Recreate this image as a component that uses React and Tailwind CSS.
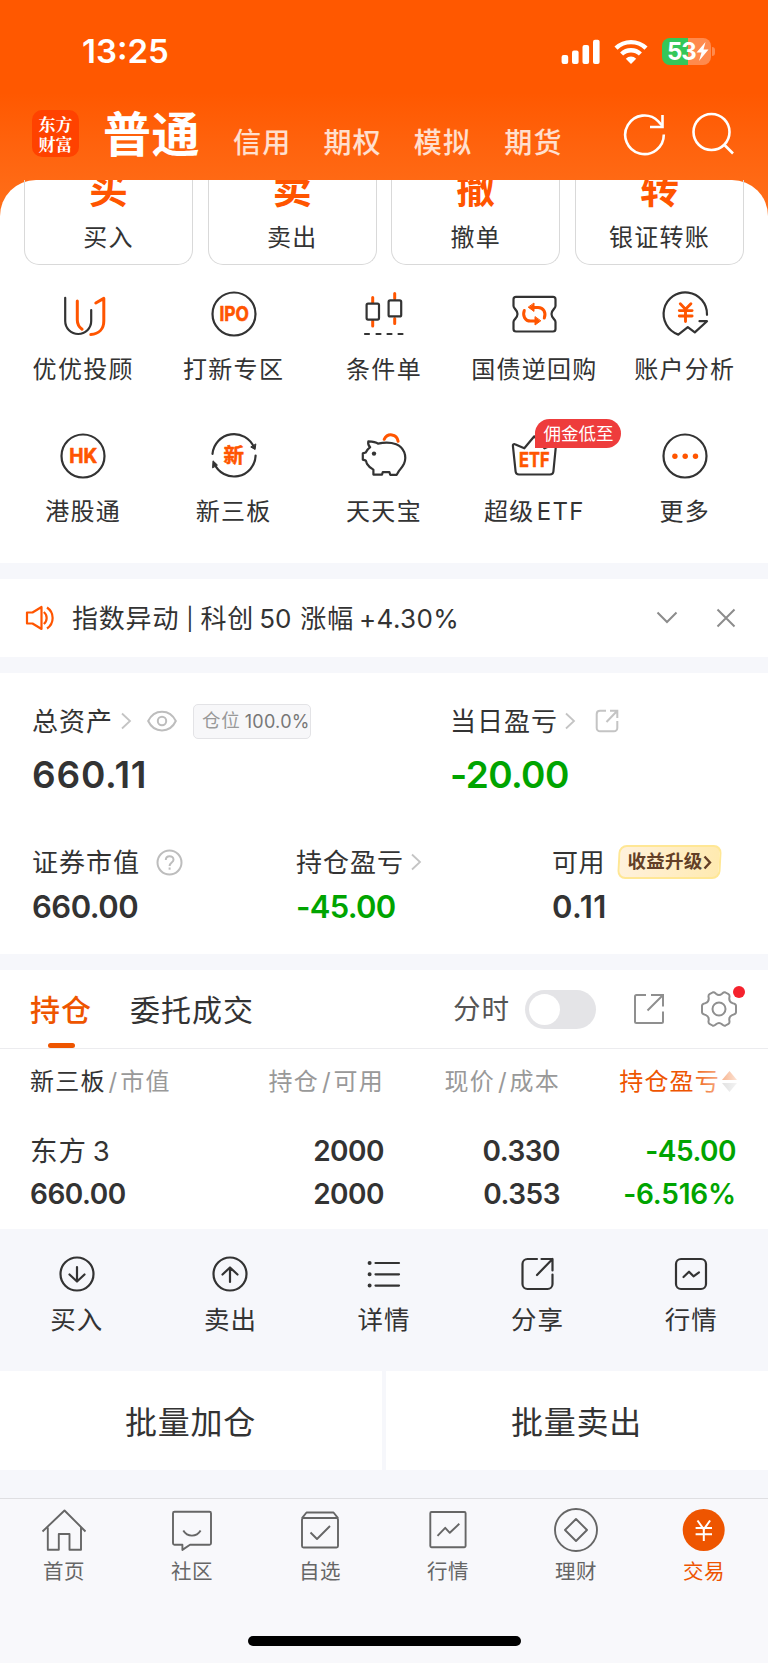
import React from "react";

const INK = "#333333";
const ORANGE = "#ff5500";

const markets = ["信用", "期权", "模拟", "期货"];

const tradeCards = [
  { mark: "买", label: "买入" },
  { mark: "卖", label: "卖出" },
  { mark: "撤", label: "撤单" },
  { mark: "转", label: "银证转账" },
];

const Svg = ({ size = 48, className = "", children }) => (
  <svg
    width={size}
    height={size}
    viewBox={`0 0 ${size} ${size}`}
    fill="none"
    stroke={INK}
    strokeWidth="2.2"
    strokeLinecap="round"
    strokeLinejoin="round"
    className={`shrink-0 ${className}`}
  >
    {children}
  </svg>
);

const AdvisorIcon = () => (
  <Svg>
    <path d="M6.2 7.8V31a13 13 0 0 0 26 0V20" />
    <g stroke={ORANGE} strokeWidth="3">
      <path d="M18.3 11v19c0 4 1.6 7 4.8 9.2" />
      <path d="M36.8 13l8-4.6V31c0 8-5 13-13 13.6" />
    </g>
  </Svg>
);

const IpoIcon = () => (
  <Svg>
    <circle cx="24" cy="24" r="21.5" />
    <text x="9.5" y="31" fontSize="20" textLength="29.5" lengthAdjust="spacingAndGlyphs" className="fill-[#ff5500] stroke-[#ff5500] stroke-[0.6] font-bold">
      IPO
    </text>
  </Svg>
);

const CandleIcon = () => (
  <Svg>
    <g stroke={ORANGE} strokeWidth="3">
      <path d="M12.7 7.5v5M12.7 31v5M34.7 3.6v5M34.7 28.5v5" />
    </g>
    <rect x="6.6" y="13.6" width="12.4" height="16" rx="1.5" />
    <rect x="28.6" y="10.4" width="12.6" height="16" rx="1.5" />
    <path d="M5 44h4M16.5 44h4M27.5 44h4M38.5 44h4" />
  </Svg>
);

const RepoIcon = () => (
  <Svg>
    <path d="M6 6.9h37a2.5 2.5 0 0 1 2.5 2.5v6.6c0 3-4 3.5-4 8s4 5 4 8v7a2.5 2.5 0 0 1-2.5 2.5H6A2.5 2.5 0 0 1 3.5 39v-7c0-3 4-3.5 4-8s-4-5-4-8V9.4A2.5 2.5 0 0 1 6 6.9z" />
    <g stroke={ORANGE} strokeWidth="3">
      <path d="M14.3 20.5c-2 5 .7 10.6 6.2 10.6h4.2" />
      <path d="M34.3 28c2-5-.7-10.6-6.2-10.6h-4.2" />
    </g>
    <g fill={ORANGE} stroke={ORANGE} strokeWidth="1">
      <path d="M25 27v8l5.5-4z" />
      <path d="M24 13.4v8l-5.5-4z" />
    </g>
  </Svg>
);

const AnalysisIcon = () => (
  <Svg>
    <path d="M46 24.8A21.7 21.7 0 1 0 17.3 44.6l9.5-7.4 7 5.2L46 31.2h-7.5" />
    <g stroke={ORANGE} strokeWidth="2.9">
      <path d="M19.3 13.8l5.2 5.4 5.4-5.4M24.5 19.5v12M18.3 20.6h12.8M18.3 26h12.8" />
    </g>
  </Svg>
);

const HkIcon = () => (
  <Svg>
    <circle cx="24" cy="24" r="21.5" />
    <text x="10.2" y="31" fontSize="20" textLength="28" lengthAdjust="spacingAndGlyphs" className="fill-[#ff5500] stroke-[#ff5500] stroke-[0.6] font-bold">
      HK
    </text>
  </Svg>
);

const NewBoardIcon = () => (
  <Svg>
    <path d="M2.5 21.8A21.6 21.6 0 0 1 44 15.5" />
    <path d="M45.6 23.6A21.6 21.6 0 0 1 4.2 31.5" />
    <path d="M45.8 12.3l-.7 5.2-4-2.3zM2.6 35.5l.4-6.7 4.2 4z" fill={INK} strokeWidth="1" />
    <text x="13.4" y="31.3" fontSize="20.5" className="fill-[#ff5500] stroke-[#ff5500] stroke-[0.5] font-bold">
      新
    </text>
  </Svg>
);

const PiggyIcon = () => (
  <Svg>
    <path d="M8.3 9.4c3.5.2 7.5.6 9.7 2.2 5-1 13-1.2 18.2.6 8 3.4 11 12 7.8 19.6-1.4 3.1-4.2 6-5.3 7.6l-2 3.4h-6.5l-.8-2.7h-6.6l-.8 2.5h-8.6v-5c-3-1.6-5-3.3-6.4-5.7-.8-1.4-.6-3.2-1.6-3.500l-2.600-.8v-6.200l2.900-.9c.9-2 2.200-3.500 4.500-5.300-1.700-1.500-2.400-3.400-1.900-5.800z" />
    <path d="M24.2 7.300c3.300-6.600 12.600-5.800 13.900 2" stroke={ORANGE} strokeWidth="3" />
    <circle cx="14" cy="21.6" r="2.2" fill={INK} stroke="none" />
  </Svg>
);

const EtfIcon = () => (
  <Svg>
    <path d="M2.9 13.8c-.2-1.300.9-2 2-1.500l9.400 4L24.300 4.300l10.200 12 9.400-4c1.100-.5 2.200.2 2 1.500l-2.500 25.700c-.2 2-1.400 3-3.400 3H9c-2 0-3.200-1-3.400-3z" />
    <text x="9" y="35.3" fontSize="20" textLength="30.5" lengthAdjust="spacingAndGlyphs" className="fill-[#ff5500] stroke-[#ff5500] stroke-[0.6] font-bold">
      ETF
    </text>
  </Svg>
);

const MoreIcon = () => (
  <Svg>
    <circle cx="24" cy="24" r="21.5" />
    <g fill={ORANGE} stroke="none">
      <circle cx="13.9" cy="24.2" r="2.7" />
      <circle cx="24.2" cy="24.2" r="2.7" />
      <circle cx="34.5" cy="24.2" r="2.7" />
    </g>
  </Svg>
);

const shortcuts = [
  { label: "优优投顾", icon: <AdvisorIcon /> },
  { label: "打新专区", icon: <IpoIcon /> },
  { label: "条件单", icon: <CandleIcon /> },
  { label: "国债逆回购", icon: <RepoIcon /> },
  { label: "账户分析", icon: <AnalysisIcon /> },
  { label: "港股通", icon: <HkIcon /> },
  { label: "新三板", icon: <NewBoardIcon /> },
  { label: "天天宝", icon: <PiggyIcon /> },
  { label: "超级 ETF", icon: <EtfIcon />, badge: "佣金低至" },
  { label: "更多", icon: <MoreIcon /> },
];

const actions = [
  {
    label: "买入",
    icon: (
      <Svg size={38}>
        <circle cx="19" cy="19" r="16.5" />
        <path d="M19 12v14M11.5 19.500l7.500 7 7.500-7" />
      </Svg>
    ),
  },
  {
    label: "卖出",
    icon: (
      <Svg size={38}>
        <circle cx="19" cy="19" r="16.5" />
        <path d="M19 27V12.500M11.500 19.500l7.500-7 7.500 7" />
      </Svg>
    ),
  },
  {
    label: "详情",
    icon: (
      <Svg size={38}>
        <path d="M10.5 8H34M10.5 19.3H34M10.5 30.6H34" />
        <path d="M4.6 8h.01M4.6 19.3h.01M4.6 30.6h.01" strokeWidth="4" />
      </Svg>
    ),
  },
  {
    label: "分享",
    icon: (
      <Svg size={38}>
        <path d="M18 4H8.5A5 5 0 0 0 3.5 9v20a5 5 0 0 0 5 5h20a5 5 0 0 0 5-5v-9.500" />
        <path d="M22.5 4h11v11.500M33.500 4L18 20" />
      </Svg>
    ),
  },
  {
    label: "行情",
    icon: (
      <Svg size={38}>
        <rect x="4" y="4" width="30" height="30" rx="5" />
        <path d="M11.5 22l5.500-5.300 4.500 4.600 5.500-4" />
      </Svg>
    ),
  },
];

const tabs = [
  {
    label: "首页",
    icon: (
      <path d="M2.5 25.500L24.500 4.500l21 21M7.800 21.500v22.200h11V28H29.500v15.700h11.500V21.500" />
    ),
  },
  {
    label: "社区",
    icon: (
      <>
        <path d="M6.5 5.700h35a1.500 1.500 0 0 1 1.500 1.500v30a1.500 1.500 0 0 1-1.500 1.500H22l-7.600 5.200v-5.200H6.500A1.500 1.500 0 0 1 5 37.200v-30a1.500 1.500 0 0 1 1.500-1.500z" />
        <path d="M15.3 24.500c4 6.800 13.300 6.800 17.300 0" />
      </>
    ),
  },
  {
    label: "自选",
    icon: (
      <>
        <path d="M6 12.200l4.500-5.700h27l4.500 5.700" />
        <rect x="6" y="12" width="36" height="29.5" rx="1.5" />
        <path d="M14.5 26.500l6.500 6.500L34 20" />
      </>
    ),
  },
  {
    label: "行情",
    icon: (
      <>
        <rect x="6.3" y="6" width="35.3" height="35.3" rx="1.2" />
        <path d="M13.5 29.800l7.700-8 4.600 5L35.300 17.800" />
      </>
    ),
  },
  {
    label: "理财",
    icon: (
      <>
        <circle cx="24" cy="24" r="21" />
        <path d="M24 13L35 24 24 35 13 24z" />
      </>
    ),
  },
  {
    label: "交易",
    active: true,
    icon: (
      <>
        <circle cx="23.7" cy="24" r="21" fill="#ee5500" stroke="none" />
        <path d="M17.5 14.500l6.300 8.800 6.300-8.800M23.800 22v13M15.600 22H32M15.600 28.200H32" stroke="#fff" strokeWidth="2" />
      </>
    ),
  },
];

const Chevron = ({ className = "" }) => (
  <svg
    width="12"
    height="18"
    viewBox="0 0 12 18"
    fill="none"
    stroke="#c4c4c4"
    strokeWidth="1.8"
    className={`shrink-0 ${className}`}
  >
    <path d="M2 1.500L10 9l-8 7.500" />
  </svg>
);

const Slash = () => <span className="mx-[3px] tracking-normal">/</span>;

const StatusBar = () => (
  <div className="flex h-[103px] items-center pl-[82px] pr-[53px]">
    <span className="flex-1 text-[33px] font-semibold leading-none">13:25</span>
    <svg width="40" height="26" viewBox="0 0 40 26" fill="#fff">
      <rect x="0.6" y="16" width="6.6" height="9" rx="2" />
      <rect x="11" y="11.5" width="6.6" height="13.5" rx="2" />
      <rect x="21.5" y="6" width="6.6" height="19" rx="2" />
      <rect x="32" y="0.8" width="6.6" height="24.2" rx="2" />
    </svg>
    <svg
      width="34"
      height="26"
      viewBox="0 0 34 26"
      fill="none"
      stroke="#fff"
      strokeWidth="4.4"
      className="ml-[13px]"
    >
      <path d="M2 9.200a21.500 21.500 0 0 1 30 0" />
      <path d="M7.600 15a13.500 13.500 0 0 1 18.800 0" />
      <path d="M17 25l5.200-5.300a7.400 7.400 0 0 0-10.400 0z" fill="#fff" stroke="none" />
    </svg>
    <div className="ml-[14px] flex h-[27px] w-[49px] items-center rounded-lg bg-linear-to-r from-[#34c759] from-53% to-[#ff8a4d] to-53% pl-[5px]">
      <span className="text-[24px] font-bold leading-none tracking-[-1px]">
        53
      </span>
      <svg width="13" height="19" viewBox="0 0 13 19" fill="#fff">
        <path d="M9.500 0L0.500 10.500h5L3 19l9.500-11.500h-5z" />
      </svg>
    </div>
    <span className="ml-px h-[9px] w-[3px] rounded-r-full bg-[#ff8a4d]" />
  </div>
);

const NavBar = () => (
  <div className="flex h-[77px] items-start pl-8 pr-[33px]">
    <div className="mt-[7px] flex size-[47px] flex-col items-center justify-center rounded-[10px] bg-[#ff4200] font-['Noto_Serif_CJK_SC','Noto_Sans_CJK_SC',serif] text-[17px] font-bold leading-[20px]">
      <span>东方</span>
      <span>财富</span>
    </div>
    <span className="ml-[24px] mt-[2px] text-[48px] font-bold leading-[60px] tracking-[0.5px]">
      普通
    </span>
    <div className="ml-[33px] mt-[19.5px] flex flex-1 gap-[32px] text-[28px] font-medium leading-[40px] tracking-[1.2px] text-white/80">
      {markets.map((name) => (
        <span key={name}>{name}</span>
      ))}
    </div>
    <svg
      width="44"
      height="44"
      viewBox="0 0 44 44"
      fill="none"
      stroke="#fff"
      strokeWidth="2.6"
      className="mt-[9px]"
    >
      <path d="M40.8 22.500A19.300 19.300 0 1 1 35.300 9.300L39 13.500" />
      <path d="M39.5 3v12H27" />
    </svg>
    <svg
      width="44"
      height="44"
      viewBox="0 0 44 44"
      fill="none"
      stroke="#fff"
      strokeWidth="2.6"
      className="ml-[24px] mt-[9px]"
    >
      <circle cx="20.5" cy="20" r="18" />
      <path d="M33 32.500l9 9" />
    </svg>
  </div>
);

const TradeCards = () => (
  <div className="flex h-[85px] gap-[14.5px] overflow-hidden px-6">
    {tradeCards.map((card) => (
      <div
        key={card.label}
        className="flex flex-1 flex-col items-center rounded-b-[15px] border border-t-0 border-[#d9d9d9]"
      >
        <span className="-mt-[17px] h-[57px] text-[39px] font-bold leading-[52px] text-[#ff5500]">
          {card.mark}
        </span>
        <span className="h-9 text-[24px] leading-9 tracking-[1.2px]">
          {card.label}
        </span>
      </div>
    ))}
  </div>
);

const Shortcuts = () => (
  <div className="grid h-[298px] grid-cols-5 content-start gap-y-[42px] pl-2 pr-2 pt-[25px]">
    {shortcuts.map((item) => (
      <div key={item.label} className="flex h-[100px] flex-col items-center">
        <div className="relative">
          {item.icon}
          {item.badge && (
            <span className="absolute -top-[13px] left-[25px] flex h-[29px] w-[86px] items-center justify-center rounded-[15px] rounded-bl-none bg-[#ee3c3c] text-[17.5px] leading-none text-white">
              {item.badge}
            </span>
          )}
        </div>
        <span className="mt-[14px] whitespace-nowrap text-[24px] leading-9 tracking-[1.3px] [word-spacing:-6px]">
          {item.label}
        </span>
      </div>
    ))}
  </div>
);

const Notice = () => (
  <div className="my-4 flex h-[78px] items-center bg-white pl-[25px] pr-[32px]">
    <svg
      width="30"
      height="26"
      viewBox="0 0 30 26"
      fill="none"
      stroke={ORANGE}
      strokeWidth="2.2"
      strokeLinejoin="round"
    >
      <path d="M2 7.500h5.500L16.500 2v22l-9-5.500H2z" />
      <path d="M18.800 7c3.800 3 3.800 9 0 12M22 2.500c7.500 5 7.500 16 0 21" />
    </svg>
    <div className="ml-[17px] mt-[2px] flex flex-1 items-center text-[26px] leading-9">
      <span className="tracking-[0.8px]">指数异动</span>
      <span className="ml-[7px] text-[22px]">|</span>
      <span className="ml-[7px] tracking-[0.8px]">科创</span>
      <span className="ml-[5px]">50</span>
      <span className="ml-[9px] tracking-[0.8px]">涨幅</span>
      <span className="ml-[5px] tracking-[0.4px]">+4.30%</span>
    </div>
    <svg width="22" height="14" viewBox="0 0 22 14" fill="none" stroke="#8c8c8c" strokeWidth="2">
      <path d="M1.500 1.500l9.500 9.500 9.500-9.500" />
    </svg>
    <svg
      width="20"
      height="20"
      viewBox="0 0 20 20"
      fill="none"
      stroke="#8c8c8c"
      strokeWidth="2"
      className="ml-[38px]"
    >
      <path d="M1.500 1.500l17 17M18.500 1.500l-17 17" />
    </svg>
  </div>
);

const Assets = () => (
  <div className="h-[281px] bg-white pl-8 pt-[28px]">
    <div className="flex">
      <div className="w-[418px]">
        <div className="flex h-10 items-center text-[26px] tracking-[1px]">
          <span>总资产</span>
          <Chevron className="ml-[7px]" />
          <svg
            width="30"
            height="22"
            viewBox="0 0 30 22"
            fill="none"
            stroke="#bdbdbd"
            strokeWidth="2"
            className="ml-[15px]"
          >
            <path d="M1.200 11C7-1.500 23-1.500 28.800 11 23 23.500 7 23.500 1.200 11z" />
            <circle cx="15" cy="11" r="4.200" />
          </svg>
          <span className="ml-[16px] flex h-[35px] w-[118px] items-center whitespace-nowrap rounded-[5px] border border-[#e3e3e6] bg-[#f7f7f9] pl-[8px] text-[18px] tracking-[0.3px] text-[#777]">
            <span className="mr-[4px] text-[18.5px] tracking-[0.8px] text-[#999]">
              仓位
            </span>
            100.0%
          </span>
        </div>
        <div className="mt-[10px] text-[37px] font-semibold leading-[48px] tracking-[0.8px]">
          660.11
        </div>
      </div>
      <div>
        <div className="flex h-10 items-center text-[26px] tracking-[1px]">
          <span>当日盈亏</span>
          <Chevron className="ml-[6px]" />
          <svg
            width="24"
            height="24"
            viewBox="0 0 24 24"
            fill="none"
            stroke="#c4c4c4"
            strokeWidth="2"
            className="ml-[19px]"
          >
            <path d="M11 1.800H5A3.300 3.300 0 0 0 1.700 5v14A3.300 3.300 0 0 0 5 22.300h14a3.300 3.300 0 0 0 3.300-3.300v-7" />
            <path d="M15 1.800h7.300V9M22.300 1.800L11.500 13" />
          </svg>
        </div>
        <div className="mt-[10px] text-[37px] font-semibold leading-[48px] tracking-[-0.6px] text-[#00a400]">
          -20.00
        </div>
      </div>
    </div>
    <div className="mt-[43px] flex">
      <div className="w-[264px]">
        <div className="flex h-10 items-center text-[26px] tracking-[1px]">
          <span>证券市值</span>
          <svg
            width="27"
            height="27"
            viewBox="0 0 27 27"
            fill="none"
            stroke="#bdbdbd"
            strokeWidth="2"
            className="ml-[16px]"
          >
            <circle cx="13.500" cy="13.500" r="12" />
            <path d="M9.800 11c0-5.200 7.700-5 7.700-.3 0 2.800-3.900 2.900-3.900 6.300" />
            <path d="M13.600 18.500v2.200" />
          </svg>
        </div>
        <div className="mt-[5px] text-[31px] font-semibold leading-10 tracking-[-0.5px]">
          660.00
        </div>
      </div>
      <div className="w-[256px]">
        <div className="flex h-10 items-center text-[26px] tracking-[1px]">
          <span>持仓盈亏</span>
          <Chevron className="ml-[6px]" />
        </div>
        <div className="mt-[5px] text-[31px] font-semibold leading-10 tracking-[-0.7px] text-[#00a400]">
          -45.00
        </div>
      </div>
      <div>
        <div className="flex h-10 items-center text-[26px] tracking-[0.5px]">
          <span>可用</span>
          <span className="relative ml-[13px] flex h-[34px] w-[103px] items-center justify-center text-[18.5px] font-bold tracking-[0.3px] text-[#633f27]">
            <span className="absolute inset-0 -skew-x-3 rounded-[8px] border-2 border-[#ffe795] bg-linear-to-r from-[#fff1dc] to-[#ffeab0]" />
            <span className="relative">收益升级</span>
            <svg width="9" height="15" viewBox="0 0 9 15" fill="none" stroke="#633f27" strokeWidth="2.4" className="relative">
              <path d="M1.500 1.500L7 7.500l-5.500 6" />
            </svg>
          </span>
        </div>
        <div className="mt-[5px] text-[31px] font-semibold leading-10 tracking-[0.5px]">
          0.11
        </div>
      </div>
    </div>
  </div>
);

const HoldingTabs = () => (
  <div className="flex h-[79px] items-center border-b border-[#ececef] pl-[30px] pr-[30px] text-[30px] tracking-[1px]">
    <div className="relative flex h-full items-center pt-[2px] font-medium text-[#ee5500]">
      持仓
      <span className="absolute bottom-0 left-[17.5px] h-[5.5px] w-[27.5px] rounded-full bg-[#ee5500]" />
    </div>
    <span className="ml-[38px] mt-[2px] flex-1">委托成交</span>
    <span className="mt-[2px] text-[27.5px] text-[#555]">分时</span>
    <span className="ml-[15px] flex h-[39px] w-[71px] items-center rounded-full bg-[#e4e4e7] pl-1">
      <span className="size-[31px] rounded-full bg-white" />
    </span>
    <svg
      width="32"
      height="32"
      viewBox="0 0 32 32"
      fill="none"
      stroke="#8f8f8f"
      strokeWidth="2"
      className="ml-[37px]"
    >
      <path d="M13 2H3.500A1.500 1.500 0 0 0 2 3.500v25A1.500 1.500 0 0 0 3.500 30h25a1.500 1.500 0 0 0 1.500-1.500V18.500" />
      <path d="M18 2h12v11.500M30 2L14.500 17.500" />
    </svg>
    <span className="relative ml-[36px]">
      <svg
        width="38"
        height="38"
        viewBox="0 0 38 38"
        fill="none"
        stroke="#8f8f8f"
        strokeWidth="2"
        strokeLinejoin="round"
        className="-ml-px"
      >
        <path d="M12.500 2.500c1.500-.8 2.500.3 3.500 1.200 1.800 1.500 4.200 1.500 6 0 1-.9 2-2 3.500-1.200l3 1.700c1.600.9 1 2.300.8 3.700-.3 2.500.9 4.300 3.200 5.200 1.500.6 3.500.8 3.500 2.700v6.400c0 1.900-2 2.100-3.500 2.700-2.300.9-3.500 2.700-3.200 5.200.2 1.400.8 2.800-.8 3.700l-3 1.700c-1.500.8-2.500-.3-3.500-1.200-1.800-1.500-4.200-1.500-6 0-1 .9-2 2-3.500 1.200l-3-1.700c-1.600-.9-1-2.300-.8-3.700.3-2.500-.9-4.300-3.200-5.200C4 24.300 2 24.100 2 22.200v-6.400c0-1.900 2-2.100 3.500-2.700 2.300-.9 3.500-2.700 3.200-5.200-.2-1.400-.8-2.800.8-3.700z" />
        <circle cx="19" cy="19" r="6.500" />
      </svg>
      <span className="absolute -right-[7px] -top-[4px] size-3 rounded-full bg-[#f5222d]" />
    </span>
  </div>
);

const Holdings = () => (
  <div className="h-[180px] pl-[30px]">
    <div className="grid h-[65px] grid-cols-[185px_169px_176px_178px] items-center text-right text-[24px] tracking-[1.2px] text-[#999]">
      <div className="text-left">
        <span className="text-[#333]">新三板</span>
        <Slash />
        市值
      </div>
      <div>
        持仓
        <Slash />
        可用
      </div>
      <div>
        现价
        <Slash />
        成本
      </div>
      <div className="relative flex items-center justify-end text-[#ee5500]">
        <span className="mr-[2px]">持仓盈亏</span>
        <svg width="15" height="22" viewBox="0 0 15 22" className="mr-px">
          <path d="M7.500 0L15 9H0z" fill="#ee5500" />
          <path d="M7.500 21L15 12H0z" fill="#bbb" />
        </svg>
        <span className="absolute inset-y-0 right-0 w-[48px] bg-linear-to-r from-white/0 to-white/85" />
      </div>
    </div>
    <div className="mt-[16px] grid grid-cols-[185px_169px_176px_176px] text-right text-[28px] font-semibold leading-[42.5px] tracking-[-0.5px]">
      <div className="text-left text-[27.5px] font-normal tracking-[1px] [word-spacing:-3px]">
        东方 3
      </div>
      <div>2000</div>
      <div>0.330</div>
      <div className="text-[#00a400]">-45.00</div>
      <div className="text-left">660.00</div>
      <div>2000</div>
      <div>0.353</div>
      <div className="tracking-[-0.2px] text-[#00a400]">-6.516%</div>
    </div>
  </div>
);

const Actions = () => (
  <div className="grid h-[142px] grid-cols-5 pt-[26px]">
    {actions.map((item) => (
      <div key={item.label} className="flex flex-col items-center">
        {item.icon}
        <span className="mt-[9px] text-[25.5px] leading-9 tracking-[1px]">
          {item.label}
        </span>
      </div>
    ))}
  </div>
);

const TabBar = () => (
  <div className="h-[165px] border-t border-[#dfdfe2] bg-[#f8f8fb]">
    <div className="grid grid-cols-6 pt-[7px]">
      {tabs.map((tab) => (
        <div
          key={tab.label}
          className={`flex flex-col items-center ${
            tab.active ? "text-[#ee5500]" : "text-[#666]"
          }`}
        >
          <svg
            width="48"
            height="48"
            viewBox="0 0 48 48"
            fill="none"
            stroke="#666"
            strokeWidth="1.9"
            strokeLinejoin="round"
          >
            {tab.icon}
          </svg>
          <span className="mt-[3px] text-[20.5px] leading-[30px] tracking-[0.5px]">
            {tab.label}
          </span>
        </div>
      ))}
    </div>
    <div className="mx-auto mt-[49px] h-[10px] w-[273px] rounded-full bg-black" />
  </div>
);

const App = () => {
  return (
    <div className="h-[1663px] w-[768px] overflow-hidden bg-[#f6f7fb] font-['Inter','Noto_Sans_CJK_SC',sans-serif] text-[#333]">
      <div className="bg-linear-to-b from-[#ff5800] from-35% to-[#ff6f19] to-80%">
        <div className="text-white">
          <StatusBar />
          <NavBar />
        </div>
        <div className="rounded-t-[36px] bg-white">
          <TradeCards />
        </div>
      </div>
      <div className="bg-white">
        <Shortcuts />
      </div>
      <Notice />
      <Assets />
      <div className="mt-4 bg-white">
        <HoldingTabs />
        <Holdings />
      </div>
      <Actions />
      <div className="mb-[28px] flex h-[99px] gap-1 text-[32px] tracking-[0.8px]">
        {["批量加仓", "批量卖出"].map((label) => (
          <div
            key={label}
            className="flex flex-1 items-center justify-center bg-white pr-px pt-[4px]"
          >
            {label}
          </div>
        ))}
      </div>
      <TabBar />
    </div>
  );
};

export default App;
